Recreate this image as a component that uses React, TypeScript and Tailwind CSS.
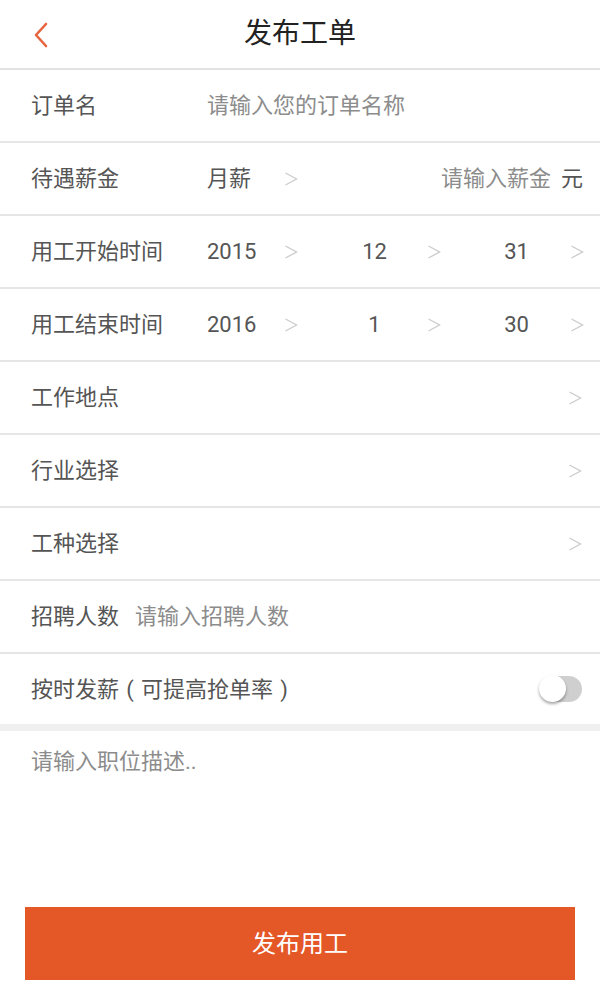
const FONT = "font-['Roboto','Noto_Sans_CJK_SC',sans-serif]";

function Arrow() {
  return (
    <svg width="14" height="14" viewBox="0 0 14 14" className="shrink-0">
      <polyline points="1.5,1 12.5,7 1.5,13" fill="none" stroke="#cdcdcd" strokeWidth="1.4" />
    </svg>
  );
}

function Row({ children, border = true }: { children: React.ReactNode; border?: boolean }) {
  return (
    <div
      className={`flex items-center pl-[31px] pr-[16px] text-[22px] text-[#555] ${
        border ? "h-[73px] border-b-2 border-[#e6e6e6]" : "h-[70px]"
      }`}
    >
      {children}
    </div>
  );
}

function DateRow({ label, year, month, day }: { label: string; year: string; month: string; day: string }) {
  return (
    <Row>
      <span className="w-[176px] shrink-0">{label}</span>
      <div className="flex w-[91px] items-center justify-between">
        <span>{year}</span>
        <Arrow />
      </div>
      <div className="flex w-[143px] items-center">
        <span className="flex-1 pl-[24px] text-center">{month}</span>
        <Arrow />
      </div>
      <div className="flex w-[143px] items-center">
        <span className="flex-1 pl-[22px] text-center">{day}</span>
        <Arrow />
      </div>
    </Row>
  );
}

function LinkRow({ label }: { label: string }) {
  return (
    <Row>
      <span className="flex-1">{label}</span>
      <span className="mr-[2px] flex">
        <Arrow />
      </span>
    </Row>
  );
}

function Paren({ c }: { c: string }) {
  return <span className="inline-block w-[22px] text-center">{c}</span>;
}

export default function App() {
  return (
    <div className={`flex min-h-screen w-[600px] flex-col bg-white ${FONT}`}>
      <header className="relative flex h-[70px] items-center justify-center border-b-2 border-[#e2e2e2]">
        <svg className="absolute left-[33px] top-[22px]" width="16" height="26" viewBox="0 0 16 26">
          <polyline points="13,2 3,13 13,24" fill="none" stroke="#e8643e" strokeWidth="2.6" strokeLinecap="round" strokeLinejoin="round" />
        </svg>
        <h1 className="text-[28px] text-[#222]">发布工单</h1>
      </header>

      <Row>
        <span className="w-[176px] shrink-0">订单名</span>
        <span className="text-[#8c8c8c]">请输入您的订单名称</span>
      </Row>

      <Row>
        <span className="w-[176px] shrink-0">待遇薪金</span>
        <div className="flex w-[91px] items-center justify-between">
          <span>月薪</span>
          <Arrow />
        </div>
        <span className="flex-1 text-right text-[#8c8c8c]">请输入薪金</span>
        <span className="ml-[10px] mr-[1px]">元</span>
      </Row>

      <DateRow label="用工开始时间" year="2015" month="12" day="31" />
      <DateRow label="用工结束时间" year="2016" month="1" day="30" />

      <LinkRow label="工作地点" />
      <LinkRow label="行业选择" />
      <LinkRow label="工种选择" />

      <Row>
        <span className="mr-[16px]">招聘人数</span>
        <span className="text-[#8c8c8c]">请输入招聘人数</span>
      </Row>

      <Row border={false}>
        <span className="flex-1">
          按时发薪<Paren c="(" />可提高抢单率<Paren c=")" />
        </span>
        <div className="relative mr-[2px] h-[26px] w-[42px] rounded-full bg-[#cfcfcf]">
          <div className="absolute -left-px -top-px h-[27px] w-[27px] rounded-full bg-white shadow-[0_2px_3px_rgba(0,0,0,0.35)]" />
        </div>
      </Row>

      <div className="h-[7px] bg-[#f0f0f0]" />

      <div className="h-[176px] px-[31px] pt-[14px] text-[22px] text-[#8c8c8c]">请输入职位描述..</div>

      <button className="mx-[25px] h-[73px] bg-[#e45727] text-[24px] text-white">发布用工</button>
    </div>
  );
}
